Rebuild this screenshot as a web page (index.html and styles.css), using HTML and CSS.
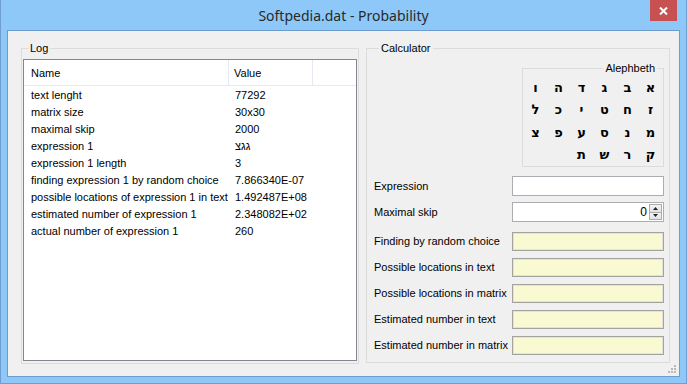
FILE: index.html
```html
<!DOCTYPE html>
<html lang="en">
<head>
  <meta charset="UTF-8">
  <title>Softpedia.dat - Probability</title>
  <link rel="stylesheet" href="styles.css">
</head>
<body>

  <div class="window">
    <div class="titlebar">
      <span class="title">Softpedia.dat - Probability</span>
      <span class="close">
        <svg width="9" height="8" viewBox="0 0 9 8"><path d="M1 0.5 L8 7.5 M8 0.5 L1 7.5" stroke="#fff" stroke-width="2"/></svg>
      </span>
    </div>

    <div class="client">
      <!-- Log -->
      <fieldset class="group log">
        <legend>Log</legend>
        <div class="listview">
          <div class="lv-head">
            <div class="col-name">Name</div>
            <div class="col-value">Value</div>
            <div class="col-fill"></div>
          </div>
          <div class="lv-row"><div class="col-name">text lenght</div><div class="col-value">77292</div></div>
          <div class="lv-row"><div class="col-name">matrix size</div><div class="col-value">30x30</div></div>
          <div class="lv-row"><div class="col-name">maximal skip</div><div class="col-value">2000</div></div>
          <div class="lv-row"><div class="col-name">expression 1</div><div class="col-value">גגצ</div></div>
          <div class="lv-row"><div class="col-name">expression 1 length</div><div class="col-value">3</div></div>
          <div class="lv-row"><div class="col-name">finding expression 1 by random choice</div><div class="col-value">7.866340E-07</div></div>
          <div class="lv-row"><div class="col-name">possible locations of expression 1 in text</div><div class="col-value">1.492487E+08</div></div>
          <div class="lv-row"><div class="col-name">estimated number of expression 1</div><div class="col-value">2.348082E+02</div></div>
          <div class="lv-row"><div class="col-name">actual number of expression 1</div><div class="col-value">260</div></div>
        </div>
      </fieldset>

      <!-- Calculator -->
      <fieldset class="group calc">
        <legend>Calculator</legend>

        <fieldset class="alephbeth">
          <legend>Alephbeth</legend>
          <div class="letters">
            <span>א</span><span>ב</span><span>ג</span><span>ד</span><span>ה</span><span>ו</span>
            <span>ז</span><span>ח</span><span>ט</span><span>י</span><span>כ</span><span>ל</span>
            <span>מ</span><span>נ</span><span>ס</span><span>ע</span><span>פ</span><span>צ</span>
            <span>ק</span><span>ר</span><span>ש</span><span>ת</span>
          </div>
        </fieldset>

        <div class="form-row first">
          <label>Expression</label>
          <div class="textbox"></div>
        </div>
        <div class="form-row">
          <label>Maximal skip</label>
          <div class="textbox spin">
            <span class="spin-value">0</span>
            <span class="spin-buttons">
              <span class="spin-btn"><svg width="5" height="3" viewBox="0 0 5 3"><path d="M0 3 L2.5 0 L5 3Z" fill="#222"/></svg></span>
              <span class="spin-btn"><svg width="5" height="3" viewBox="0 0 5 3"><path d="M0 0 L2.5 3 L5 0Z" fill="#222"/></svg></span>
            </span>
          </div>
        </div>
        <div class="form-row result-first">
          <label>Finding by random choice</label>
          <div class="textbox result"></div>
        </div>
        <div class="form-row">
          <label>Possible locations in text</label>
          <div class="textbox result"></div>
        </div>
        <div class="form-row">
          <label>Possible locations in matrix</label>
          <div class="textbox result"></div>
        </div>
        <div class="form-row">
          <label>Estimated number in text</label>
          <div class="textbox result"></div>
        </div>
        <div class="form-row">
          <label>Estimated number in matrix</label>
          <div class="textbox result"></div>
        </div>
      </fieldset>

      <span class="grip">
        <svg width="10" height="10" viewBox="0 0 10 10" fill="#b9b9b9">
          <rect x="7" y="1" width="2" height="2"/>
          <rect x="4" y="4" width="2" height="2"/><rect x="7" y="4" width="2" height="2"/>
          <rect x="1" y="7" width="2" height="2"/><rect x="4" y="7" width="2" height="2"/><rect x="7" y="7" width="2" height="2"/>
        </svg>
      </span>
    </div>
  </div>

</body>
</html>
```

FILE: styles.css
```css
body {
  margin: 0;
  font-family: 'Liberation Sans', Arial, sans-serif;
  font-size: 11px;
  color: #000;
  background: #fff;
}

/* Window frame */
.window {
  width: 687px;
  height: 384px;
  box-sizing: border-box;
  background: #8ec8f8;
  border: 1px solid #6f9fd1;
  border-top: none;
  display: flex;
  flex-direction: column;
}

.titlebar {
  height: 30px;
  position: relative;
  display: flex;
  align-items: center;
  justify-content: center;
}
.title {
  font-family: 'Noto Sans', 'Open Sans', sans-serif;
  font-size: 14px;
  color: #2a2a2a;
  margin-top: 1px;
}
.close {
  position: absolute;
  top: 0;
  right: 9px;
  width: 27px;
  height: 21px;
  background: #c75050;
  display: flex;
  align-items: center;
  justify-content: center;
}

.client {
  flex: 1;
  margin: 0 6px 6px 6px;
  border: 1px solid #6d9ccd;
  background: #f0f0f0;
  position: relative;
  display: flex;
  align-items: flex-start;
  gap: 7px;
  padding: 11px 9px 0 13px;
}

/* Group boxes */
.group {
  margin: 0;
  border: 1px solid #dcdcdc;
  min-width: 0;
  box-sizing: border-box;
}
.group > legend {
  padding: 0 2px;
  line-height: 13px;
  color: #000;
}
.log {
  width: 338px;
  padding: 0 1px 2px 1px;
}
.log > legend { margin-left: 5px; }
.calc {
  width: 304px;
  padding: 0 5px 7px 7px;
  display: flex;
  flex-direction: column;
}
.calc > legend { margin-left: 5px; }

/* List view */
.listview {
  margin-top: 4px;
  height: 302px;
  box-sizing: border-box;
  border: 1px solid #828790;
  background: #fff;
}
.lv-head {
  display: flex;
  height: 25px;
  border-bottom: 1px solid #e5eaf2;
}
.lv-head > div {
  display: flex;
  align-items: center;
  border-right: 1px solid #e5eaf2;
}
.lv-head .col-fill {
  flex: 1;
  border-right: none;
}
.col-name {
  width: 205px;
  padding-left: 7px;
  box-sizing: border-box;
}
.col-value {
  width: 84px;
  padding-left: 5px;
  box-sizing: border-box;
}
.lv-row {
  display: flex;
  height: 17px;
  align-items: center;
  white-space: nowrap;
}
.lv-row .col-name { width: 206px; }

/* Alephbeth box */
.alephbeth {
  align-self: flex-end;
  width: 140px;
  margin: 7px 0 0 0;
  padding: 0 1px 0 1px;
  border: 1px solid #dcdcdc;
  box-sizing: border-box;
}
.alephbeth > legend {
  margin-left: auto;
  margin-right: 5px;
  padding: 0 2px;
  line-height: 13px;
}
.letters {
  direction: rtl;
  display: grid;
  grid-template-columns: repeat(6, 23px);
  grid-auto-rows: 22.5px;
  padding-top: 1px;
}
.letters span {
  display: flex;
  align-items: center;
  justify-content: center;
  font-family: 'DejaVu Sans', sans-serif;
  font-weight: bold;
  font-size: 13px;
}

/* Form rows */
.form-row {
  display: flex;
  align-items: center;
  justify-content: space-between;
  height: 20px;
  margin-top: 6px;
}
.form-row.first { margin-top: 9px; }
.form-row.result-first { margin-top: 9px; }

.textbox {
  width: 152px;
  height: 20px;
  box-sizing: border-box;
  border: 1px solid #abadb3;
  background: #fff;
}
.textbox.result {
  height: 19px;
  border: 1px solid #a3a3a3;
  box-shadow: inset 0 0 0 1px #e2e2d6;
  background: #fafad2;
}
.spin {
  display: flex;
  justify-content: flex-end;
  align-items: center;
  padding-right: 1px;
}
.spin-value {
  margin-right: 2px;
  font-size: 12px;
}
.spin-buttons {
  display: flex;
  flex-direction: column;
  width: 13px;
  height: 16px;
}
.spin-btn {
  flex: 1;
  display: flex;
  align-items: center;
  justify-content: center;
  background: linear-gradient(#f3f3f3, #e2e2e2);
  border: 1px solid #acacac;
}
.spin-btn + .spin-btn { border-top: none; }

.grip {
  position: absolute;
  right: 2px;
  bottom: 2px;
  width: 10px;
  height: 10px;
}
```
